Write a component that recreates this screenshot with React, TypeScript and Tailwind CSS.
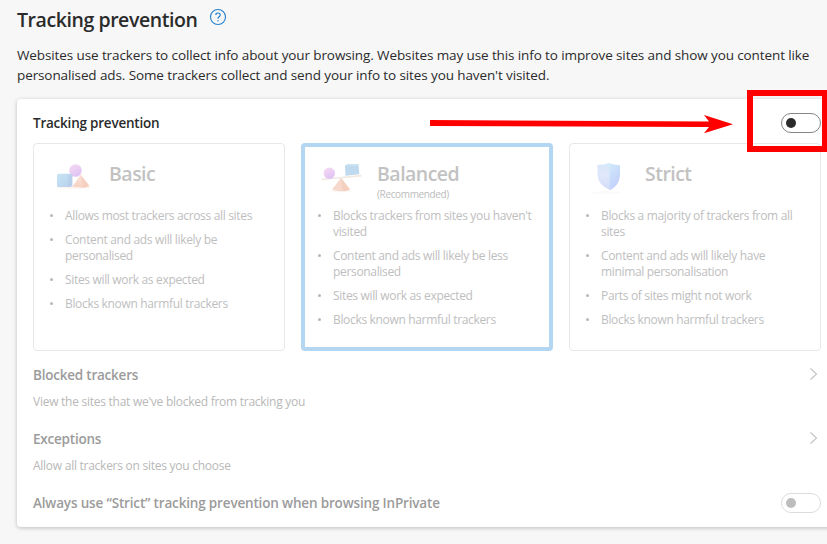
import React from "react";
import clsx from "clsx";

type Level = {
  title: string;
  note?: string;
  icon: React.ReactNode;
  selected?: boolean;
  points: string[];
};

const BasicIcon = () => (
  <svg width="60" height="45" viewBox="0 0 60 45">
    <defs>
      <linearGradient id="cube" x1="0" y1="0" x2="1" y2="1">
        <stop offset="0" stopColor="#c6e6f3" />
        <stop offset="1" stopColor="#b9cfee" />
      </linearGradient>
      <linearGradient id="ball" x1="0" y1="0" x2="0.6" y2="1">
        <stop offset="0" stopColor="#f8dcf3" />
        <stop offset="1" stopColor="#dfc2f3" />
      </linearGradient>
      <linearGradient id="cone" x1="0" y1="0" x2="0" y2="1">
        <stop offset="0" stopColor="#f9e3da" />
        <stop offset="1" stopColor="#f7d2c2" />
      </linearGradient>
    </defs>
    <ellipse cx="34" cy="32.5" rx="17" ry="1.2" fill="#faf3ef" />
    <circle cx="35.5" cy="15.5" r="6.3" fill="url(#ball)" />
    <path d="M17 19.5 L19 18.8 H31 L32.3 19.5 V31 L30 32 H18 L17 31 Z" fill="url(#cube)" />
    <path d="M28 19.5 H32.3 V31 L28 32 Z" fill="#b5cbe9" opacity="0.6" />
    <path d="M40.5 19.5 L49.5 31 L44 32.7 L32.5 31.8 Z" fill="url(#cone)" />
    <path d="M40.5 19.5 L49.5 31 L44 32.7 Z" fill="#f5c9b8" opacity="0.6" />
  </svg>
);

const BalancedIcon = () => (
  <svg width="60" height="45" viewBox="0 0 60 45">
    <ellipse cx="31" cy="36" rx="11" ry="1.3" fill="#fcf7f4" />
    <path d="M31 23 L40 34.5 Q31 38 22 34.5 Z" fill="#f6d9cc" />
    <path d="M31 23 L40 34.5 Q37 36 33 36.3 Z" fill="#f4cebf" />
    <path d="M12 23.7 L51.5 19.8 V21.4 L12 25.3 Z" fill="#f1e8e2" />
    <circle cx="19.3" cy="18.3" r="5.7" fill="url(#ball)" />
    <path d="M35 10.5 L38 9 L48.5 9.3 L49.3 19.3 L35.5 20.8 Z" fill="#bfd9ee" />
    <path d="M35 10.5 L38 9 L48.5 9.3 L48 10.8 Z" fill="#cee5f3" />
  </svg>
);

const StrictIcon = () => (
  <svg width="60" height="45" viewBox="0 0 60 45">
    <defs>
      <linearGradient id="shieldL" x1="0" y1="0" x2="0" y2="1">
        <stop offset="0" stopColor="#d5e7f7" />
        <stop offset="0.4" stopColor="#e0e8fb" />
        <stop offset="1" stopColor="#d3ddf9" />
      </linearGradient>
      <linearGradient id="shieldR" x1="0" y1="0" x2="0.5" y2="1">
        <stop offset="0" stopColor="#d0ebfb" />
        <stop offset="1" stopColor="#c2cffa" />
      </linearGradient>
    </defs>
    <ellipse cx="27" cy="37.5" rx="15" ry="1.3" fill="#fbfafa" />
    <path d="M17.5 10 Q24 10 29 8 L30 35 Q18 30 17.5 20 Z" fill="url(#shieldL)" />
    <path d="M29 8 Q34 10 40 10.3 V20 Q39.5 30 30.5 35 L29.5 34.5 Z" fill="url(#shieldR)" />
  </svg>
);

const levels: Level[] = [
  {
    title: "Basic",
    icon: <BasicIcon />,
    points: [
      "Allows most trackers across all sites",
      "Content and ads will likely be\npersonalised",
      "Sites will work as expected",
      "Blocks known harmful trackers",
    ],
  },
  {
    title: "Balanced",
    note: "(Recommended)",
    icon: <div className="-mr-0.5 ml-0.5"><BalancedIcon /></div>,
    selected: true,
    points: [
      "Blocks trackers from sites you haven't\nvisited",
      "Content and ads will likely be less\npersonalised",
      "Sites will work as expected",
      "Blocks known harmful trackers",
    ],
  },
  {
    title: "Strict",
    icon: <div className="-mr-1 ml-1"><StrictIcon /></div>,
    points: [
      "Blocks a majority of trackers from all\nsites",
      "Content and ads will likely have\nminimal personalisation",
      "Parts of sites might not work",
      "Blocks known harmful trackers",
    ],
  },
];

const Toggle = ({ disabled }: { disabled?: boolean }) => (
  <button
    type="button"
    role="switch"
    aria-checked={false}
    aria-label="Toggle"
    disabled={disabled}
    className={clsx(
      "flex h-5 w-10 items-center rounded-full border bg-white pl-1",
      disabled ? "border-[#dcdcdc]" : "border-[#858585]"
    )}
  >
    <span className={clsx("size-2.5 rounded-full", disabled ? "bg-[#bdbdbd]" : "bg-[#2b2b2b]")} />
  </button>
);

const LevelCard = ({ level }: { level: Level }) => (
  <div
    className={clsx(
      "h-52 w-[252px] rounded",
      level.selected ? "border-4 border-[#b3d6f2]" : "border border-[#e8e8e8]"
    )}
  >
    <div className={level.selected ? "-m-[3px]" : ""}>
      <div className="flex h-16 pl-1.5 pt-[11px]">
        {level.icon}
        <div className="pl-[9px] pt-[5px]">
          <h3 className="text-[19.5px] font-semibold leading-7 tracking-[-0.52px] text-[#c2c2c2]">{level.title}</h3>
          {level.note && <p className="text-[10px] leading-3 tracking-[-0.36px] text-[#bcbcbc]">{level.note}</p>}
        </div>
      </div>
      <ul className="flex flex-col gap-2 text-xs leading-4 tracking-[-0.33px] text-[#bebebe]">
        {level.points.map((point) => (
          <li key={point} className="flex whitespace-pre">
            <span className="ml-4 mt-[6px] size-[3px] shrink-0 rounded-full bg-[#b8b8b8]" />
            <span className="ml-3">{point}</span>
          </li>
        ))}
      </ul>
    </div>
  </div>
);

const LinkRow = ({ title, text }: { title: string; text: string }) => (
  <div className="flex h-16 justify-between">
    <div>
      <h3 className="text-[13.5px] font-semibold leading-5 tracking-[-0.22px] text-[#9b9b9b]">{title}</h3>
      <p className="mt-[9px] text-xs leading-4 tracking-[-0.26px] text-[#b8b8b8]">{text}</p>
    </div>
    <svg width="10" height="14" viewBox="0 0 10 14" className="mr-[2px] mt-[2px]" fill="none">
      <path d="M1.5 1.5 L7.5 7 L1.5 12.5" stroke="#c2c2c2" strokeWidth="1.1" />
    </svg>
  </div>
);

const App = () => {
  return (
    <main className="relative h-[544px] w-full overflow-hidden bg-[#f7f7f7] pl-[17px] font-['Open_Sans',sans-serif] text-[#2b2b2b]">
      <div className="flex h-[45px] items-start gap-3 pt-[5px]">
        <h1 className="w-[180px] whitespace-nowrap text-[19.5px] font-semibold leading-[30px] tracking-[-0.43px]">Tracking prevention</h1>
        <svg width="18" height="18" viewBox="0 0 18 18" className="mt-[3px]" fill="none" stroke="#2380cf">
          <circle cx="9" cy="9" r="7.5" strokeWidth="1.1" />
          <path d="M6.8 7.1 Q6.8 5 9 5 Q11.2 5 11.2 7 Q11.2 8 10.1 8.8 Q9 9.6 9 10.8" strokeWidth="1.2" />
          <circle cx="9" cy="12.7" r="0.7" fill="#2380cf" stroke="none" />
        </svg>
      </div>
      <p className="whitespace-pre text-[13.5px] leading-5 tracking-[-0.105px]">
        {"Websites use trackers to collect info about your browsing. Websites may use this info to improve sites and show you content like\npersonalised ads. Some trackers collect and send your info to sites you haven't visited."}
      </p>

      <section className="mt-[14px] h-[428px] w-[820px] rounded bg-white px-4 shadow-[0_1px_4px_rgba(0,0,0,0.24)]">
        <div className="flex h-11 items-center justify-between pt-1">
          <h2 className="text-[13.5px] font-semibold leading-5 tracking-[-0.22px]">Tracking prevention</h2>
          <Toggle />
        </div>
        <div className="flex gap-4">
          {levels.map((level) => (
            <LevelCard key={level.title} level={level} />
          ))}
        </div>
        <div className="pt-[14px]">
          <LinkRow title="Blocked trackers" text="View the sites that we've blocked from tracking you" />
          <LinkRow title="Exceptions" text="Allow all trackers on sites you choose" />
          <div className="flex items-center justify-between">
            <h3 className="text-[13.5px] font-semibold leading-5 tracking-[-0.165px] text-[#9b9b9b]">
              Always use “Strict” tracking prevention when browsing InPrivate
            </h3>
            <Toggle disabled />
          </div>
        </div>
      </section>

      {/* red annotation over the main toggle */}
      <div className="absolute left-[747px] top-[90px] h-[62px] w-[81px] border-6 border-[#ff0000]" />
      <svg width="304" height="20" viewBox="0 0 304 20" className="absolute left-[430px] top-[114px]">
        <path d="M0 6 L279 7.5 L274 1 L303 10.3 L274 19.3 L279 13 L0 12 Z" fill="#ff0000" />
      </svg>
    </main>
  );
};

export default App;
